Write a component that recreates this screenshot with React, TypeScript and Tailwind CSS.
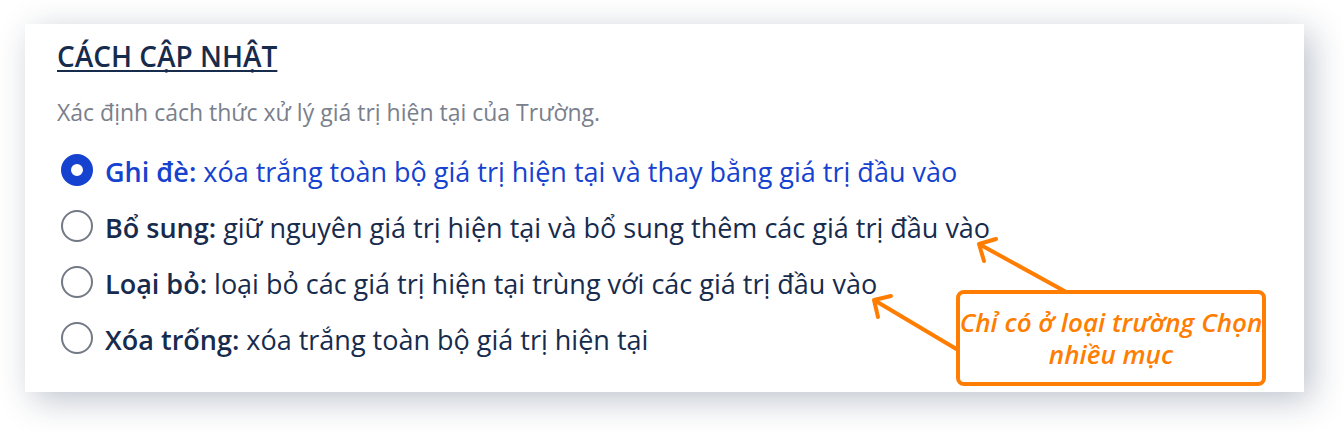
import { useState } from "react";

const options = [
  { id: "overwrite", name: "Ghi đè:", text: "xóa trắng toàn bộ giá trị hiện tại và thay bằng giá trị đầu vào" },
  { id: "append", name: "Bổ sung:", text: "giữ nguyên giá trị hiện tại và bổ sung thêm các giá trị đầu vào" },
  { id: "remove", name: "Loại bỏ:", text: "loại bỏ các giá trị hiện tại trùng với các giá trị đầu vào" },
  { id: "clear", name: "Xóa trống:", text: "xóa trắng toàn bộ giá trị hiện tại" },
];

function Callout() {
  return (
    <aside className="pointer-events-none absolute top-[212px] left-[843px] text-[#ff7d00]">
      <svg className="block" width="204" height="120" viewBox="0 0 204 120" fill="none" stroke="currentColor" strokeWidth="4" strokeLinecap="round" strokeLinejoin="round" aria-hidden="true">
        <path d="M200 57 111 8M128 3 111 8 116 25" />
        <path d="M90 114 6 64M23 60 6 64 10 81" />
      </svg>
      <p className="absolute top-[54px] left-[88px] flex h-24 w-[310px] items-center justify-center rounded-lg border-4 border-current bg-white text-center text-[26px] leading-8 font-semibold whitespace-nowrap italic">
        <span>
          Chỉ có ở loại trường Chọn
          <br />
          nhiều mục
        </span>
      </p>
    </aside>
  );
}

export default function App() {
  const [selected, setSelected] = useState("overwrite");
  return (
    <main className="overflow-hidden bg-white pt-6 pr-10 pb-10 pl-[25px] font-['Open_Sans','Noto_Sans',sans-serif] text-[#172b4d]">
      <section className="relative bg-white px-8 pt-3 pb-6 shadow-[8px_8px_32px_rgba(23,43,77,0.28)]">
        <h2
          id="mode-title"
          className="text-[28px] leading-10 font-semibold underline decoration-2 underline-offset-3 [text-decoration-skip-ink:none]"
        >
          CÁCH CẬP NHẬT
        </h2>
        <p className="mt-5 text-[23px] leading-8 text-[#7a808c]">Xác định cách thức xử lý giá trị hiện tại của Trường.</p>
        <div role="radiogroup" aria-labelledby="mode-title" className="mt-3.5 mb-0.5 pl-1">
          {options.map((o) => (
            <label
              key={o.id}
              htmlFor={o.id}
              className="flex h-14 items-center gap-3 text-[27px] leading-9 whitespace-nowrap has-[:checked]:text-[#1542cf]"
            >
              <input
                id={o.id}
                type="radio"
                name="mode"
                checked={selected === o.id}
                onChange={() => setSelected(o.id)}
                className="size-8 shrink-0 appearance-none rounded-full border-2 border-[#737985] bg-white checked:border-10 checked:border-[#1542cf]"
              />
              <span className="pt-1">
                <strong className="font-semibold">{o.name}</strong> {o.text}
              </span>
            </label>
          ))}
        </div>
        <Callout />
      </section>
    </main>
  );
}
